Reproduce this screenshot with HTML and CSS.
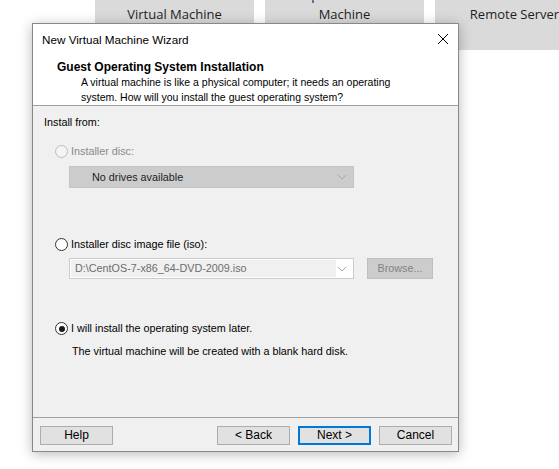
FILE: index.html
```html
<!DOCTYPE html>
<html>
<head>
<meta charset="utf-8">
<link rel="stylesheet" href="styles.css">
</head>
<body>
<div class="tiles">
  <div class="tile">Create a New<br>Virtual Machine</div>
  <div class="tile">Open a Virtual<br>Machine</div>
  <div class="tile">Connect to a<br>Remote Server</div>
</div>

<div class="dialog">
  <div class="titlebar">
    <span class="title">New Virtual Machine Wizard</span>
    <svg class="close" width="12" height="12" viewBox="0 0 12 12"><path d="M1 1L11 11M11 1L1 11" stroke="#000" stroke-width="1" fill="none"/></svg>
  </div>
  <div class="header">
    <div class="h-title">Guest Operating System Installation</div>
    <div class="h-desc">A virtual machine is like a physical computer; it needs an operating system. How will you install the guest operating system?</div>
  </div>
  <div class="content">
    <div class="label">Install from:</div>

    <div class="radio-row r1 disabled"><span class="radio"></span><span>Installer disc:</span></div>
    <div class="select disabled-select">
      <span>No drives available</span>
      <svg class="chev" width="10" height="6" viewBox="0 0 10 6"><path d="M1 1L5 5L9 1" stroke="#a8a8a8" fill="none"/></svg>
    </div>

    <div class="radio-row r2"><span class="radio"></span><span>Installer disc image file (iso):</span></div>
    <div class="iso-row">
      <div class="combo">
        <span class="combo-text">D:\CentOS-7-x86_64-DVD-2009.iso</span>
        <svg class="chev" width="10" height="6" viewBox="0 0 10 6"><path d="M1 1L5 5L9 1" stroke="#a8a8a8" fill="none"/></svg>
      </div>
      <div class="browse">Browse...</div>
    </div>

    <div class="radio-row r3"><span class="radio checked"></span><span>I will install the operating system later.</span></div>
    <div class="note">The virtual machine will be created with a blank hard disk.</div>
  </div>
  <div class="footer">
    <div class="btn">Help</div>
    <div class="spacer"></div>
    <div class="btn">&lt; Back</div>
    <div class="btn default">Next &gt;</div>
    <div class="btn">Cancel</div>
  </div>
</div>
</body>
</html>
```

FILE: styles.css
```css
html, body {
  margin: 0;
  padding: 0;
}
body {
  width: 559px;
  height: 469px;
  overflow: hidden;
  background: #ffffff;
  position: relative;
  font-family: "Liberation Sans", Arial, sans-serif;
  font-size: 11px;
  color: #000;
}

.tiles {
  display: flex;
  gap: 11px;
  padding-left: 95px;
  margin-top: -14px;
  font-family: "Open Sans", sans-serif;
}
.tile {
  width: 159px;
  flex: none;
  height: 64px;
  background: #dadada;
  color: #1e1e1e;
  font-size: 13px;
  line-height: 19px;
  text-align: center;
}

.dialog {
  position: absolute;
  left: 32px;
  top: 23px;
  width: 425px;
  height: 427px;
  border: 1px solid #888888;
  background: #f0f0f0;
  box-shadow: 0 2px 12px rgba(0, 0, 0, 0.28);
  display: flex;
  flex-direction: column;
}

.titlebar {
  height: 30px;
  background: #ffffff;
  display: flex;
  align-items: center;
  padding-left: 9px;
  padding-right: 9px;
}
.title {
  flex: 1;
  font-size: 11.7px;
}
.close {
  display: block;
}

.header {
  background: #ffffff;
  padding: 6px 0 0 24px;
  height: 45px;
  border-bottom: 1px solid #a0a0a0;
  line-height: 15px;
}
.h-title {
  font-weight: bold;
  font-size: 12px;
}
.h-desc {
  padding-left: 24px;
  padding-right: 30px;
  font-size: 10.5px;
}

.content {
  flex: 1;
  display: flex;
  flex-direction: column;
  padding-left: 11px;
  line-height: 15px;
  font-size: 10.8px;
}
.label {
  margin-top: 9px;
}
.radio-row {
  display: flex;
  align-items: center;
  padding-left: 11px;
}
.radio-row.r1 { margin-top: 14px; }
.radio-row.r2 { margin-top: 49px; }
.radio-row.r3 { margin-top: 42px; }
.radio {
  width: 11px;
  height: 11px;
  border: 1px solid #333333;
  border-radius: 50%;
  background: #ffffff;
  margin-right: 3px;
  position: relative;
  flex: none;
}
.radio.checked::after {
  content: "";
  position: absolute;
  left: 2.5px;
  top: 2.5px;
  width: 6px;
  height: 6px;
  border-radius: 50%;
  background: #1a1a1a;
}
.disabled {
  color: #8a8a8a;
}
.disabled .radio {
  border-color: #bcbcbc;
  background: #f4f4f4;
}

.select {
  margin-top: 7px;
  margin-left: 25px;
  width: 283px;
  height: 20px;
  border: 1px solid #c4c4c4;
  display: flex;
  align-items: center;
}
.disabled-select {
  background: #cccccc;
  color: #1e1e1e;
}
.disabled-select span {
  flex: 1;
  padding-left: 22px;
}
.chev {
  display: block;
  margin-right: 6px;
}

.iso-row {
  margin-top: 6px;
  margin-left: 25px;
  display: flex;
  gap: 13px;
}
.combo {
  width: 283px;
  height: 19px;
  border: 1px solid #cccccc;
  background: #ffffff;
  display: flex;
  align-items: center;
}
.combo-text {
  flex: none;
  width: 265px;
  margin-left: 1px;
  height: 17px;
  line-height: 17px;
  background: #f0f0f0;
  color: #6d6d6d;
  padding-left: 4px;
  box-sizing: border-box;
}
.combo .chev {
  margin-left: auto;
}
.browse {
  width: 64px;
  height: 19px;
  border: 1px solid #bfbfbf;
  background: #cccccc;
  color: #838383;
  text-align: center;
  line-height: 19px;
}

.note {
  margin-top: 8px;
  padding-left: 28px;
}

.footer {
  border-top: 1px solid #a0a0a0;
  padding: 8px 6px 6px 7px;
  display: flex;
  gap: 8px;
}
.spacer { flex: 1; }
.btn {
  width: 71px;
  height: 17px;
  border: 1px solid #adadad;
  background: #e1e1e1;
  text-align: center;
  line-height: 17px;
  font-size: 12px;
}
.btn.default {
  border: 2px solid #0078d7;
  width: 69px;
  height: 15px;
  line-height: 15px;
}
```
